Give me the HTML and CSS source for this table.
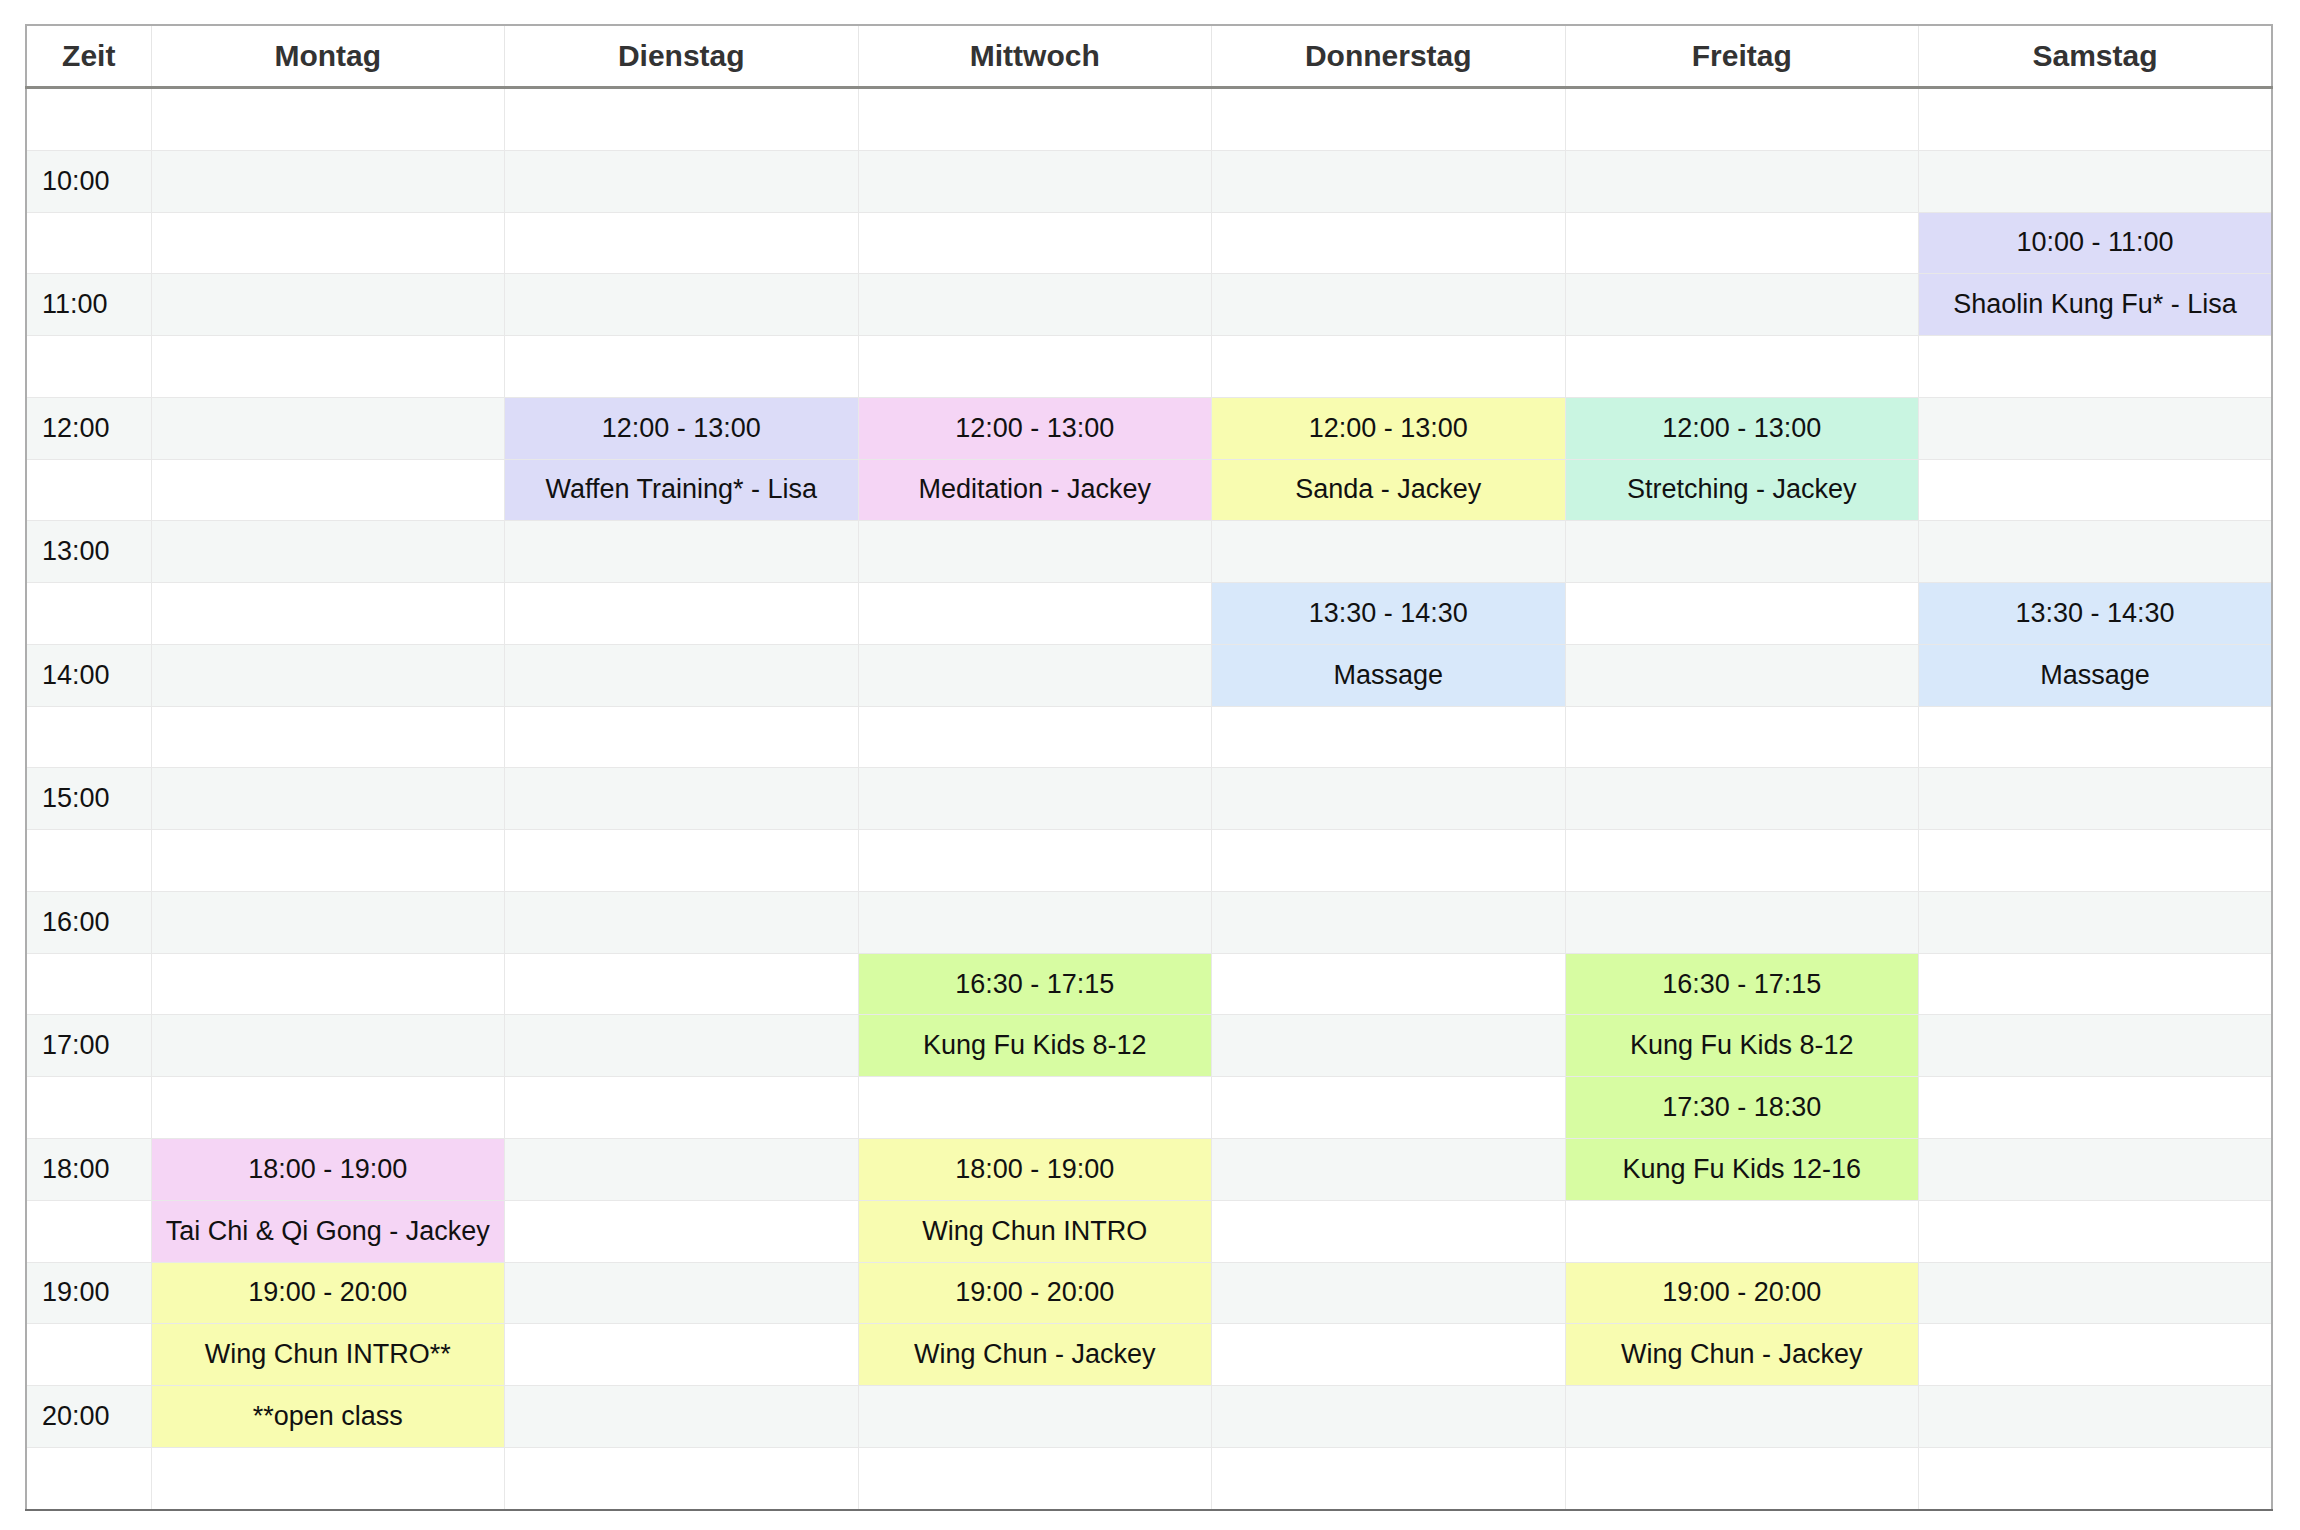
FILE: index.html
```html
<!DOCTYPE html>
<html lang="de">
<head>
<meta charset="utf-8">
<title>Stundenplan</title>
<link rel="stylesheet" href="styles.css">
</head>
<body>
<div class="page">
<table class="plan">
<colgroup>
<col class="c-time">
<col class="c-day"><col class="c-day"><col class="c-day"><col class="c-day"><col class="c-day"><col class="c-day">
</colgroup>
<thead>
<tr><th>Zeit</th><th>Montag</th><th>Dienstag</th><th>Mittwoch</th><th>Donnerstag</th><th>Freitag</th><th>Samstag</th></tr>
</thead>
<tbody>
<tr><td class="time"></td><td></td><td></td><td></td><td></td><td></td><td></td></tr>
<tr class="hour"><td class="time">10:00</td><td></td><td></td><td></td><td></td><td></td><td></td></tr>
<tr><td class="time"></td><td></td><td></td><td></td><td></td><td></td><td class="ev lav">10:00 - 11:00</td></tr>
<tr class="hour"><td class="time">11:00</td><td></td><td></td><td></td><td></td><td></td><td class="ev lav">Shaolin Kung Fu* - Lisa</td></tr>
<tr><td class="time"></td><td></td><td></td><td></td><td></td><td></td><td></td></tr>
<tr class="hour"><td class="time">12:00</td><td></td><td class="ev lav">12:00 - 13:00</td><td class="ev pink">12:00 - 13:00</td><td class="ev yel">12:00 - 13:00</td><td class="ev mint">12:00 - 13:00</td><td></td></tr>
<tr><td class="time"></td><td></td><td class="ev lav">Waffen Training* - Lisa</td><td class="ev pink">Meditation - Jackey</td><td class="ev yel">Sanda - Jackey</td><td class="ev mint">Stretching - Jackey</td><td></td></tr>
<tr class="hour"><td class="time">13:00</td><td></td><td></td><td></td><td></td><td></td><td></td></tr>
<tr><td class="time"></td><td></td><td></td><td></td><td class="ev blue">13:30 - 14:30</td><td></td><td class="ev blue">13:30 - 14:30</td></tr>
<tr class="hour"><td class="time">14:00</td><td></td><td></td><td></td><td class="ev blue">Massage</td><td></td><td class="ev blue">Massage</td></tr>
<tr><td class="time"></td><td></td><td></td><td></td><td></td><td></td><td></td></tr>
<tr class="hour"><td class="time">15:00</td><td></td><td></td><td></td><td></td><td></td><td></td></tr>
<tr><td class="time"></td><td></td><td></td><td></td><td></td><td></td><td></td></tr>
<tr class="hour"><td class="time">16:00</td><td></td><td></td><td></td><td></td><td></td><td></td></tr>
<tr><td class="time"></td><td></td><td></td><td class="ev green">16:30 - 17:15</td><td></td><td class="ev green">16:30 - 17:15</td><td></td></tr>
<tr class="hour"><td class="time">17:00</td><td></td><td></td><td class="ev green">Kung Fu Kids 8-12</td><td></td><td class="ev green">Kung Fu Kids 8-12</td><td></td></tr>
<tr><td class="time"></td><td></td><td></td><td></td><td></td><td class="ev green">17:30 - 18:30</td><td></td></tr>
<tr class="hour"><td class="time">18:00</td><td class="ev pink">18:00 - 19:00</td><td></td><td class="ev yel">18:00 - 19:00</td><td></td><td class="ev green">Kung Fu Kids 12-16</td><td></td></tr>
<tr><td class="time"></td><td class="ev pink">Tai Chi &amp; Qi Gong - Jackey</td><td></td><td class="ev yel">Wing Chun INTRO</td><td></td><td></td><td></td></tr>
<tr class="hour"><td class="time">19:00</td><td class="ev yel">19:00 - 20:00</td><td></td><td class="ev yel">19:00 - 20:00</td><td></td><td class="ev yel">19:00 - 20:00</td><td></td></tr>
<tr><td class="time"></td><td class="ev yel">Wing Chun INTRO**</td><td></td><td class="ev yel">Wing Chun - Jackey</td><td></td><td class="ev yel">Wing Chun - Jackey</td><td></td></tr>
<tr class="hour"><td class="time">20:00</td><td class="ev yel">**open class</td><td></td><td></td><td></td><td></td><td></td></tr>
<tr><td class="time"></td><td></td><td></td><td></td><td></td><td></td><td></td></tr>
</tbody>
</table>
</div>
</body>
</html>
```
FILE: styles.css
```css
html, body {
  margin: 0;
  padding: 0;
  background: #ffffff;
}

body {
  font-family: "Liberation Sans", Arial, Helvetica, sans-serif;
  color: #111111;
}

.page {
  padding: 24px 0 0 25px;
}

.plan {
  border-collapse: collapse;
  table-layout: fixed;
  width: 2248px;
  border: 2px solid #adadad;
  border-bottom: 2px solid #6f6f6f;
}

.c-time {
  width: 125px;
}

.c-day {
  width: 353.5px;
}

.plan th {
  height: 60px;
  padding: 0;
  font-size: 30px;
  font-weight: bold;
  color: #333333;
  text-align: center;
  vertical-align: middle;
  background: #ffffff;
  border-left: 1px solid #e6e6e6;
  border-right: 1px solid #e6e6e6;
  border-bottom: 3px solid #8b8b86;
}

.plan td {
  height: 60.78px;
  padding: 0;
  font-size: 27px;
  text-align: center;
  vertical-align: middle;
  border: 1px solid #e8e8e8;
  white-space: nowrap;
}

.plan td.time {
  text-align: left;
  padding-left: 15px;
}

.plan tr.hour td {
  background: #f4f7f6;
}

.plan tr td.lav { background: #dcdcf8; }
.plan tr td.pink { background: #f5d5f5; }
.plan tr td.yel { background: #f8fcb0; }
.plan tr td.mint { background: #c9f5e1; }
.plan tr td.blue { background: #d8e8fa; }
.plan tr td.green { background: #d7fca2; }
```
